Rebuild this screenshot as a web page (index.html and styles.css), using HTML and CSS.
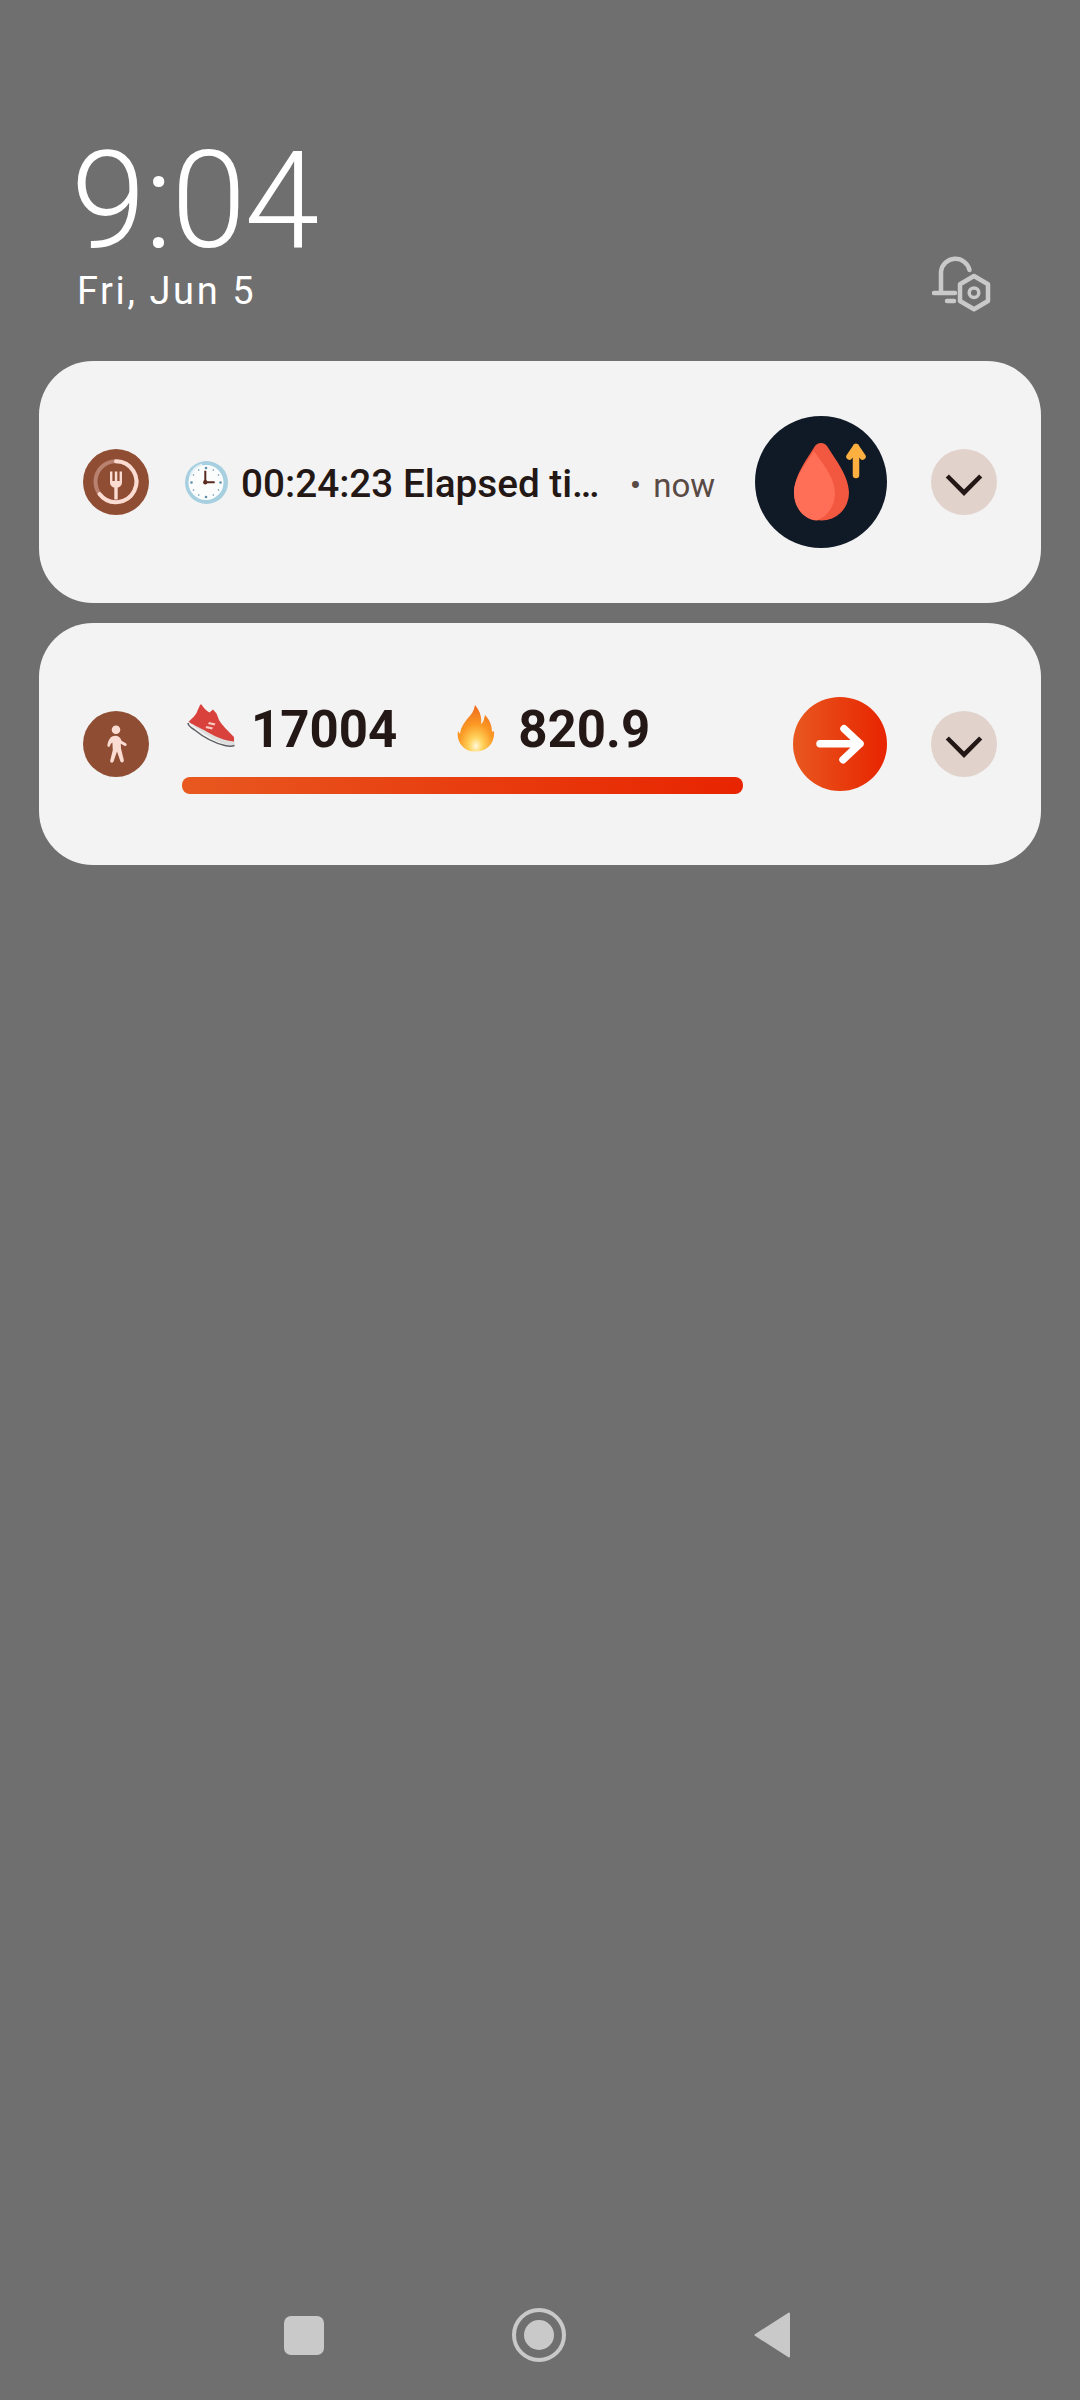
FILE: index.html
```html
<!DOCTYPE html>
<html lang="en">
<head>
<meta charset="utf-8">
<title>Lock screen</title>
<link rel="stylesheet" href="styles.css">
</head>
<body>
<div class="screen">
  <header class="top">
    <div class="clock">
      <div class="time">9:04</div>
      <div class="date">Fri, Jun 5</div>
    </div>
    <svg class="bell" viewBox="0 0 60 58" fill="none" stroke="#c9c9c9" stroke-width="4.5" stroke-linecap="round" stroke-linejoin="round">
      <path d="M9 37V16.500A14.500 14.500 0 0 1 37.500 15"/>
      <path d="M2 38H23"/>
      <path d="M15 46H22"/>
      <path d="M42 21L56 29.300V46L42 54.300L28 46V29.300Z"/>
      <circle cx="42" cy="37.700" r="4.800" stroke-width="3.500"/>
    </svg>
  </header>

  <section class="cards">
    <article class="card">
      <svg class="app-icon" viewBox="0 0 66 66">
        <circle cx="33" cy="33" r="33" fill="#8f4e33"/>
        <circle cx="33" cy="32.700" r="20.500" fill="none" stroke="#b98270" stroke-width="4"/>
        <path d="M33 12.200A20.500 20.500 0 1 1 16.500 45" fill="none" stroke="#fbdcd3" stroke-width="4" stroke-linecap="round"/>
        <path d="M27 22.500V33.500C27 36.500 29.500 38.300 31.300 38.600V50.500H34.700V38.600C36.500 38.300 39 36.500 39 33.500V22.500H36.600V32H34.300V22.500H31.800V32H29.400V22.500Z" fill="#fbdcd3"/>
      </svg>
      <div class="timer">
        <svg class="clock-emoji" viewBox="0 0 43 43">
          <circle cx="21.500" cy="21.500" r="21.500" fill="#a6cfe0"/>
          <circle cx="21" cy="21.500" r="17.500" fill="#fbfdfd"/>
          <path d="M5 16A17.500 17.500 0 0 1 17 3.500" fill="none" stroke="#e4f2f7" stroke-width="2"/>
          <g fill="#5f8fa8">
            <circle cx="21" cy="7" r="1.300"/><circle cx="21" cy="36" r="1.300"/>
            <circle cx="6.500" cy="21.500" r="1.300"/><circle cx="35.500" cy="21.500" r="1.300"/>
            <circle cx="13.700" cy="9" r=".8"/><circle cx="28.300" cy="9" r=".8"/>
            <circle cx="8.500" cy="14" r=".8"/><circle cx="33.500" cy="14" r=".8"/>
            <circle cx="8.500" cy="29" r=".8"/><circle cx="33.500" cy="29" r=".8"/>
            <circle cx="13.700" cy="34" r=".8"/><circle cx="28.300" cy="34" r=".8"/>
          </g>
          <path d="M20.300 9.700V21.300H29.700" fill="none" stroke="#5a2a20" stroke-width="2"/>
          <circle cx="20.300" cy="21.300" r="2.200" fill="#5a2a20"/>
        </svg>
        <span class="timer-text">00:24:23 Elapsed ti…</span>
        <span class="when"><span class="when-dot">•</span>now</span>
      </div>
      <svg class="large-icon" viewBox="0 0 132 132">
        <circle cx="66" cy="66" r="66" fill="#101a26"/>
        <path d="M66 27C63 27 61 28.500 60 30C52 43 39 60 39 77A27.500 27.500 0 0 0 94 77C94 60 80 43 72 30C71 28.500 69 27 66 27Z" fill="#f2573f"/>
        <path d="M59 35C52 46 39 61 39 77C39 92 49 104 62 104.500C73 100 80 90 80 77C80 62 68 48 59 35Z" fill="#ff6e57"/>
        <path d="M101 59V31M94.500 40.500L101 31L107.500 40.500" fill="none" stroke="#fdb040" stroke-width="6.500" stroke-linecap="round" stroke-linejoin="round"/>
      </svg>
      <button class="expand" type="button" aria-label="Expand">
        <svg viewBox="0 0 66 66"><path d="M16.300 27L33 43.700L49.700 27" fill="none" stroke="#231815" stroke-width="4.500"/></svg>
      </button>
    </article>

    <article class="card">
      <svg class="app-icon" viewBox="0 0 66 66">
        <circle cx="33" cy="33" r="33" fill="#8f4e33"/>
        <circle cx="33" cy="18.700" r="4.300" fill="#fbdcd3"/>
        <path d="M29 25.500C33 23.700 36.500 25 37.800 28L38.500 29.700L42.800 32.200C44.600 33.400 43.300 35.600 41.400 34.700L37.800 32.700L38 37.500L40.800 49C41.300 51.700 38 52.300 37.300 50L34 40.500L30.500 50.500C29.600 52.600 26.600 51.700 27.300 49.300L29.800 39L29.400 31.500C28 32.500 27.300 33.500 27 35C26.500 36.500 24 36 24.400 34C25 29.700 26.800 27 29 25.500Z" fill="#fbdcd3"/>
      </svg>
      <div class="activity">
        <div class="stats">
          <svg class="shoe" viewBox="0 0 48 44">
            <path d="M1 18.500C8 24 19 33 30 38C36 41 43 43 47.500 42L47.500 36L2 17Z" fill="#dedede"/>
            <path d="M1 20C1 22 3 24 7 26.500C15 33 27 40 38 42.500C42 43.500 45 43.500 47.500 42.500" fill="none" stroke="#5d5f63" stroke-width="1.500"/>
            <path d="M14 1L17 5C19 7 21 9 22.500 9.500L26 6.500L29.500 10.500L32 17C35 22 41 28 47 34V38.500C37 38 27 33 17 27C11 24 5 21 1.700 19C5 15 8 13 9.500 10C11 7 12 3 14 1Z" fill="#d9423c"/>
            <path d="M22 19L28.500 20.500L27.500 22.500L21 21ZM19.500 23L26 24.500L25 26.500L18.500 25Z" fill="#f8c9bf"/>
          </svg>
          <span class="stat-steps">17004</span>
          <svg class="flame" viewBox="0 0 38 47">
            <defs>
              <radialGradient id="fire" cx=".5" cy=".88" r=".85">
                <stop offset="0" stop-color="#fff8dc"/>
                <stop offset=".22" stop-color="#ffd35c"/>
                <stop offset=".55" stop-color="#fb9a25"/>
                <stop offset="1" stop-color="#ef6b1c"/>
              </radialGradient>
            </defs>
            <path d="M18 0C23 6 25 12 24 19C27 17 27 13 28 10C33 15 35 21 35 27L37 26C38 35 33 46 19 46.500C6 47 -1 36 1 26L3 29C4 22 7 18 11 13C14 10 17 6 18 0Z" fill="url(#fire)"/>
          </svg>
          <span class="stat-cal">820.9</span>
        </div>
        <div class="bar"></div>
      </div>
      <button class="go" type="button" aria-label="Open">
        <svg viewBox="0 0 94 94"><path d="M27 46.700H67M51 31.700L67 46.700L50 62.700" fill="none" stroke="#fff" stroke-width="7.500" stroke-linecap="round" stroke-linejoin="round"/></svg>
      </button>
      <button class="expand" type="button" aria-label="Expand">
        <svg viewBox="0 0 66 66"><path d="M16.300 27L33 43.700L49.700 27" fill="none" stroke="#231815" stroke-width="4.500"/></svg>
      </button>
    </article>
  </section>

  <nav class="nav">
    <span class="nav-square"></span>
    <span class="nav-home"><span class="nav-home-dot"></span></span>
    <svg class="nav-back" viewBox="0 0 37 46"><path d="M35 1.500V44.500L1.500 23Z" fill="#c9c9c9" stroke="#c9c9c9" stroke-width="2" stroke-linejoin="round"/></svg>
  </nav>
</div>
</body>
</html>
```

FILE: styles.css
```css
* { box-sizing: border-box; }

html, body { margin: 0; padding: 0; }

body { font-family: Roboto, "Liberation Sans", sans-serif; background: #6f6f6f; }

svg { display: block; flex: none; }

.screen {
  width: 1080px;
  height: 2400px;
  display: flex;
  flex-direction: column;
  background: #6f6f6f;
}

.top {
  height: 361px;
  padding: 0 88px 48px 71px;
  display: flex;
  justify-content: space-between;
  align-items: flex-end;
}

.clock { color: #fff; }

.time {
  font-size: 135px;
  font-weight: 300;
  line-height: 136px;
  letter-spacing: -1.5px;
}

.date {
  margin-left: 6px;
  font-size: 38px;
  font-weight: 400;
  line-height: 44px;
  letter-spacing: 2.6px;
}

.bell { width: 60px; height: 58px; }

.cards {
  margin: 0 39px;
  display: flex;
  flex-direction: column;
  gap: 20px;
}

.card {
  height: 242px;
  padding: 0 44px;
  display: flex;
  align-items: center;
  background: #f3f3f3;
  border-radius: 54px;
}

.app-icon { width: 66px; height: 66px; margin-right: 33px; }

.timer {
  flex: 1;
  display: flex;
  align-items: center;
  min-width: 0;
}

.clock-emoji { width: 43px; height: 43px; margin-left: 3px; margin-right: 13px; }

.timer-text {
  padding-top: 2px;
  font-size: 38.7px;
  font-weight: 500;
  color: #231815;
  white-space: nowrap;
}

.when {
  margin-left: auto;
  margin-right: 40px;
  padding-top: 6px;
  font-size: 33px;
  color: #5a4a45;
  white-space: nowrap;
}

.when-dot { margin-right: 12px; font-size: 34px; }

.large-icon { width: 132px; height: 132px; margin-right: 44px; }

.expand {
  width: 66px;
  height: 66px;
  padding: 0;
  border: 0;
  border-radius: 50%;
  background: #e1d2cc;
  flex: none;
}

.expand svg { width: 66px; height: 66px; }

.activity {
  flex: 1;
  display: flex;
  flex-direction: column;
  gap: 21px;
  padding-top: 6px;
}

.stats {
  display: flex;
  align-items: center;
  height: 56px;
  color: #231815;
  font-size: 51px;
  font-weight: 700;
}

.shoe { width: 48px; height: 44px; margin: 0 16px 6px 5px; }

.flame { width: 38px; height: 47px; margin: 0 23px 0 60px; }

.stat-steps, .stat-cal { padding-top: 2px; }

.bar {
  height: 17px;
  border-radius: 8px;
  background: linear-gradient(90deg, #e8581f, #e82400);
}

.go {
  width: 94px;
  height: 94px;
  margin: 0 44px 0 50px;
  padding: 0;
  border: 0;
  border-radius: 50%;
  background: linear-gradient(90deg, #e8581f, #e82400);
  flex: none;
}

.go svg { width: 94px; height: 94px; }

.nav {
  margin-top: auto;
  padding: 0 0 38px 284px;
  display: flex;
  align-items: center;
  gap: 188px;
}

.nav-square {
  width: 40px;
  height: 39px;
  border-radius: 7px;
  background: #c9c9c9;
}

.nav-home {
  width: 54px;
  height: 54px;
  border: 4px solid #c9c9c9;
  border-radius: 50%;
  display: flex;
  align-items: center;
  justify-content: center;
}

.nav-home-dot {
  width: 30px;
  height: 30px;
  border-radius: 50%;
  background: #c9c9c9;
}

.nav-back { width: 37px; height: 46px; }
```
